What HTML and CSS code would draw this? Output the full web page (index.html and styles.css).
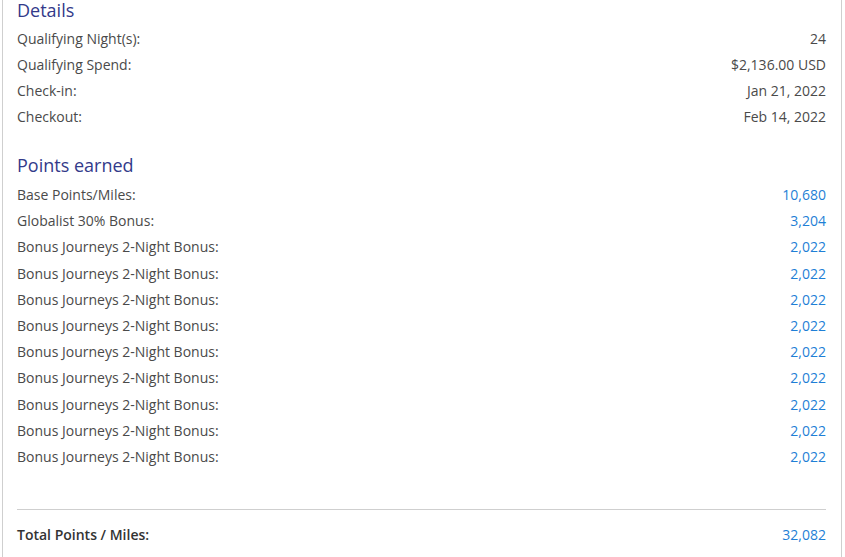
FILE: index.html
```html
<!DOCTYPE html>
<html>
<head>
<meta charset="utf-8">
<link rel="stylesheet" href="styles.css">
</head>
<body>
<div class="card">
  <h2 class="heading first">Details</h2>
  <div class="row"><span>Qualifying Night(s):</span><span>24</span></div>
  <div class="row"><span>Qualifying Spend:</span><span>$2,136.00 USD</span></div>
  <div class="row"><span>Check-in:</span><span>Jan 21, 2022</span></div>
  <div class="row"><span>Checkout:</span><span>Feb 14, 2022</span></div>

  <h2 class="heading">Points earned</h2>
  <div class="points">
    <div class="row"><span>Base Points/Miles:</span><span class="pts">10,680</span></div>
    <div class="row"><span>Globalist 30% Bonus:</span><span class="pts">3,204</span></div>
    <div class="row"><span>Bonus Journeys 2-Night Bonus:</span><span class="pts">2,022</span></div>
    <div class="row"><span>Bonus Journeys 2-Night Bonus:</span><span class="pts">2,022</span></div>
    <div class="row"><span>Bonus Journeys 2-Night Bonus:</span><span class="pts">2,022</span></div>
    <div class="row"><span>Bonus Journeys 2-Night Bonus:</span><span class="pts">2,022</span></div>
    <div class="row"><span>Bonus Journeys 2-Night Bonus:</span><span class="pts">2,022</span></div>
    <div class="row"><span>Bonus Journeys 2-Night Bonus:</span><span class="pts">2,022</span></div>
    <div class="row"><span>Bonus Journeys 2-Night Bonus:</span><span class="pts">2,022</span></div>
    <div class="row"><span>Bonus Journeys 2-Night Bonus:</span><span class="pts">2,022</span></div>
    <div class="row"><span>Bonus Journeys 2-Night Bonus:</span><span class="pts">2,022</span></div>
  </div>

  <div class="total row"><span class="total-label">Total Points / Miles:</span><span class="pts">32,082</span></div>
</div>
</body>
</html>
```
FILE: styles.css
```css
html, body {
  margin: 0;
  padding: 0;
  background: #fff;
}
body {
  font-family: "Open Sans", "Liberation Sans", sans-serif;
  color: #4a4a4a;
  font-size: 14px;
}
.card {
  box-sizing: border-box;
  width: 840px;
  margin-left: 2px;
  min-height: 600px;
  border-left: 1px solid #cfcfcf;
  border-right: 1px solid #cfcfcf;
  padding: 0 15px 0 14px;
}
.heading {
  margin: 25px 0 7px;
  font-size: 18px;
  font-weight: 400;
  line-height: 20px;
  color: #333a8a;
}
.heading.first {
  margin-top: 0;
  margin-bottom: 6px;
}
.row {
  display: flex;
  justify-content: space-between;
  height: 26px;
  line-height: 26px;
}
.points .row {
  height: 26.2px;
}
.pts {
  color: #1f7fd6;
}
.total {
  margin-top: 39px;
  border-top: 1px solid #cfcfcf;
  padding-top: 12px;
}
.total-label {
  font-weight: 600;
  color: #333;
}
```
